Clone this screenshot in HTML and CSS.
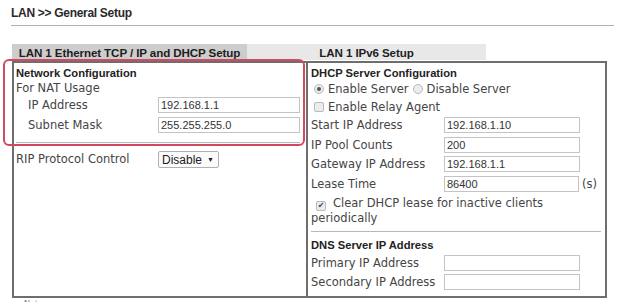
FILE: index.html
```html
<!DOCTYPE html>
<html>
<head>
<meta charset="utf-8">
<link rel="stylesheet" href="styles.css">
</head>
<body>
<div class="wrap">
  <div class="title">LAN &gt;&gt; General Setup</div>
  <div class="rule"></div>
  <div class="tabs">
    <div class="tab tab-active">LAN 1 Ethernet TCP / IP and DHCP Setup</div>
    <div class="tab tab-idle">LAN 1 IPv6 Setup</div>
  </div>
  <div class="panel">
    <div class="col col-left">
      <div class="row head">Network Configuration</div>
      <div class="row sub">For NAT Usage</div>
      <div class="row field">
        <span class="lbl lbl-indent">IP Address</span>
        <span class="inp inp-left">192.168.1.1</span>
      </div>
      <div class="row field">
        <span class="lbl lbl-indent">Subnet Mask</span>
        <span class="inp inp-left">255.255.255.0</span>
      </div>
      <div class="sep sep-left"></div>
      <div class="row field">
        <span class="lbl">RIP Protocol Control</span>
        <span class="sel">Disable<span class="arrow">&#9660;</span></span>
      </div>
    </div>
    <div class="col col-right">
      <div class="row head">DHCP Server Configuration</div>
      <div class="row opt opt-radio">
        <span class="radio on"></span><span class="optxt">Enable Server</span>
        <span class="radio"></span><span class="optxt">Disable Server</span>
      </div>
      <div class="row opt opt-relay">
        <span class="check"></span><span class="optxt">Enable Relay Agent</span>
      </div>
      <div class="row field">
        <span class="lbl lbl-r">Start IP Address</span>
        <span class="inp inp-right">192.168.1.10</span>
      </div>
      <div class="row field">
        <span class="lbl lbl-r">IP Pool Counts</span>
        <span class="inp inp-right">200</span>
      </div>
      <div class="row field">
        <span class="lbl lbl-r">Gateway IP Address</span>
        <span class="inp inp-right">192.168.1.1</span>
      </div>
      <div class="row field">
        <span class="lbl lbl-r">Lease Time</span>
        <span class="inp inp-lease">86400</span>
        <span class="unit">(s)</span>
      </div>
      <div class="clear">
        <span class="check on">&#10004;</span><span class="optxt">Clear DHCP lease for inactive clients</span>
        <div class="cont">periodically</div>
      </div>
      <div class="sep sep-right"></div>
      <div class="row head dns">DNS Server IP Address</div>
      <div class="row field">
        <span class="lbl lbl-r">Primary IP Address</span>
        <span class="inp inp-right"></span>
      </div>
      <div class="row field">
        <span class="lbl lbl-r">Secondary IP Address</span>
        <span class="inp inp-right"></span>
      </div>
    </div>
  </div>
  <div class="note">Note:</div>
  <div class="highlight"></div>
</div>
</body>
</html>
```
FILE: styles.css
```css
html, body {
  margin: 0;
  padding: 0;
  background: #ffffff;
}
body {
  width: 624px;
  height: 302px;
  overflow: hidden;
  font-family: "DejaVu Sans", Verdana, sans-serif;
  font-size: 11.5px;
  color: #454545;
}
.wrap {
  position: relative;
  padding: 6px 0 0 11px;
}
.title {
  font-family: "Liberation Sans", Arial, sans-serif;
  font-weight: bold;
  font-size: 12px;
  letter-spacing: -0.3px;
  line-height: 14px;
  color: #2a2a2a;
}
.rule {
  margin-top: 5px;
  width: 603px;
  border-top: 1px solid #b0b0b0;
}
.tabs {
  display: flex;
  margin-top: 18px;
  margin-left: 1px;
}
.tab {
  height: 16px;
  line-height: 17px;
  text-align: center;
  font-family: "Liberation Sans", Arial, sans-serif;
  font-weight: bold;
  font-size: 11.6px;
  letter-spacing: -0.1px;
  color: #1e1e1e;
}
.tab-active {
  width: 235px;
  background: #cdcdcd;
}
.tab-idle {
  width: 239px;
  background: #e8e8e8;
}
.panel {
  display: grid;
  grid-template-columns: 294px 1fr;
  margin-left: 1px;
  width: 591px;
  height: 233px;
  border: 2px solid #6e6e6e;
  margin-top: 1px;
}
.col-left {
  padding: 2px 0 0 2px;
  border-right: 2px solid #6e6e6e;
}
.col-right {
  padding: 2px 0 0 3px;
}
.row {
  display: flex;
  align-items: center;
}
.head {
  height: 15px;
  font-family: "Liberation Sans", Arial, sans-serif;
  font-weight: bold;
  font-size: 11.2px;
  color: #222222;
}
.sub {
  height: 15px;
}
.field {
  height: 19.7px;
}
.col-left .field {
  height: 20px;
}
.lbl {
  flex: none;
  width: 142px;
}
.lbl-indent {
  padding-left: 12px;
  width: 130px;
}
.lbl-r {
  width: 133px;
}
.inp {
  flex: none;
  box-sizing: border-box;
  height: 16px;
  border: 1px solid #c4c4c4;
  padding-left: 2px;
  font-family: "Liberation Sans", Arial, sans-serif;
  font-size: 11px;
  line-height: 14px;
  color: #333333;
}
.inp-left {
  width: 142px;
}
.inp-right {
  width: 136px;
}
.inp-lease {
  width: 135px;
}
.unit {
  margin-left: 3px;
}
.sel {
  flex: none;
  box-sizing: border-box;
  height: 17px;
  padding: 0 4px 0 3px;
  border: 1px solid #b0b0b0;
  border-radius: 2px;
  font-family: "Liberation Sans", Arial, sans-serif;
  font-size: 12px;
  line-height: 15px;
  color: #222222;
  background: #fbfbfb;
}
.arrow {
  font-size: 7px;
  vertical-align: 2px;
  margin-left: 5px;
}
.sep {
  height: 0;
  border-top: 1px solid #b8b8b8;
}
.sep-left {
  margin: 7px 6px 6px 0;
}
.opt {
  padding-left: 3px;
}
.opt-radio {
  height: 18px;
}
.opt-relay {
  height: 17px;
}
.radio {
  flex: none;
  box-sizing: border-box;
  width: 10px;
  height: 10px;
  border: 1px solid #b9b9b9;
  border-radius: 50%;
  background: #ececec;
  position: relative;
}
.radio.on::after {
  content: "";
  position: absolute;
  left: 2px;
  top: 2px;
  width: 4px;
  height: 4px;
  border-radius: 50%;
  background: #555555;
}
.check {
  flex: none;
  display: inline-block;
  box-sizing: border-box;
  width: 10px;
  height: 10px;
  border: 1px solid #b9b9b9;
  border-radius: 2px;
  background: #ececec;
  font-size: 8px;
  line-height: 8px;
  text-align: center;
  color: #444444;
  vertical-align: -1px;
}
.optxt {
  margin: 0 4px 0 4px;
}
.clear {
  padding: 2px 0 0 5px;
  line-height: 14px;
}
.clear .optxt {
  margin-left: 7px;
}
.cont {
  margin-left: -5px;
}
.sep-right {
  margin: 6px 4px 6px 0;
}
.dns {
  height: 15px;
}
.note {
  margin-left: 13px;
  margin-top: 2px;
  font-size: 8px;
  color: #777777;
}
.highlight {
  position: absolute;
  left: 3px;
  top: 59px;
  width: 298px;
  height: 83px;
  border: 2px solid #d24a62;
  border-radius: 6px;
}
```
